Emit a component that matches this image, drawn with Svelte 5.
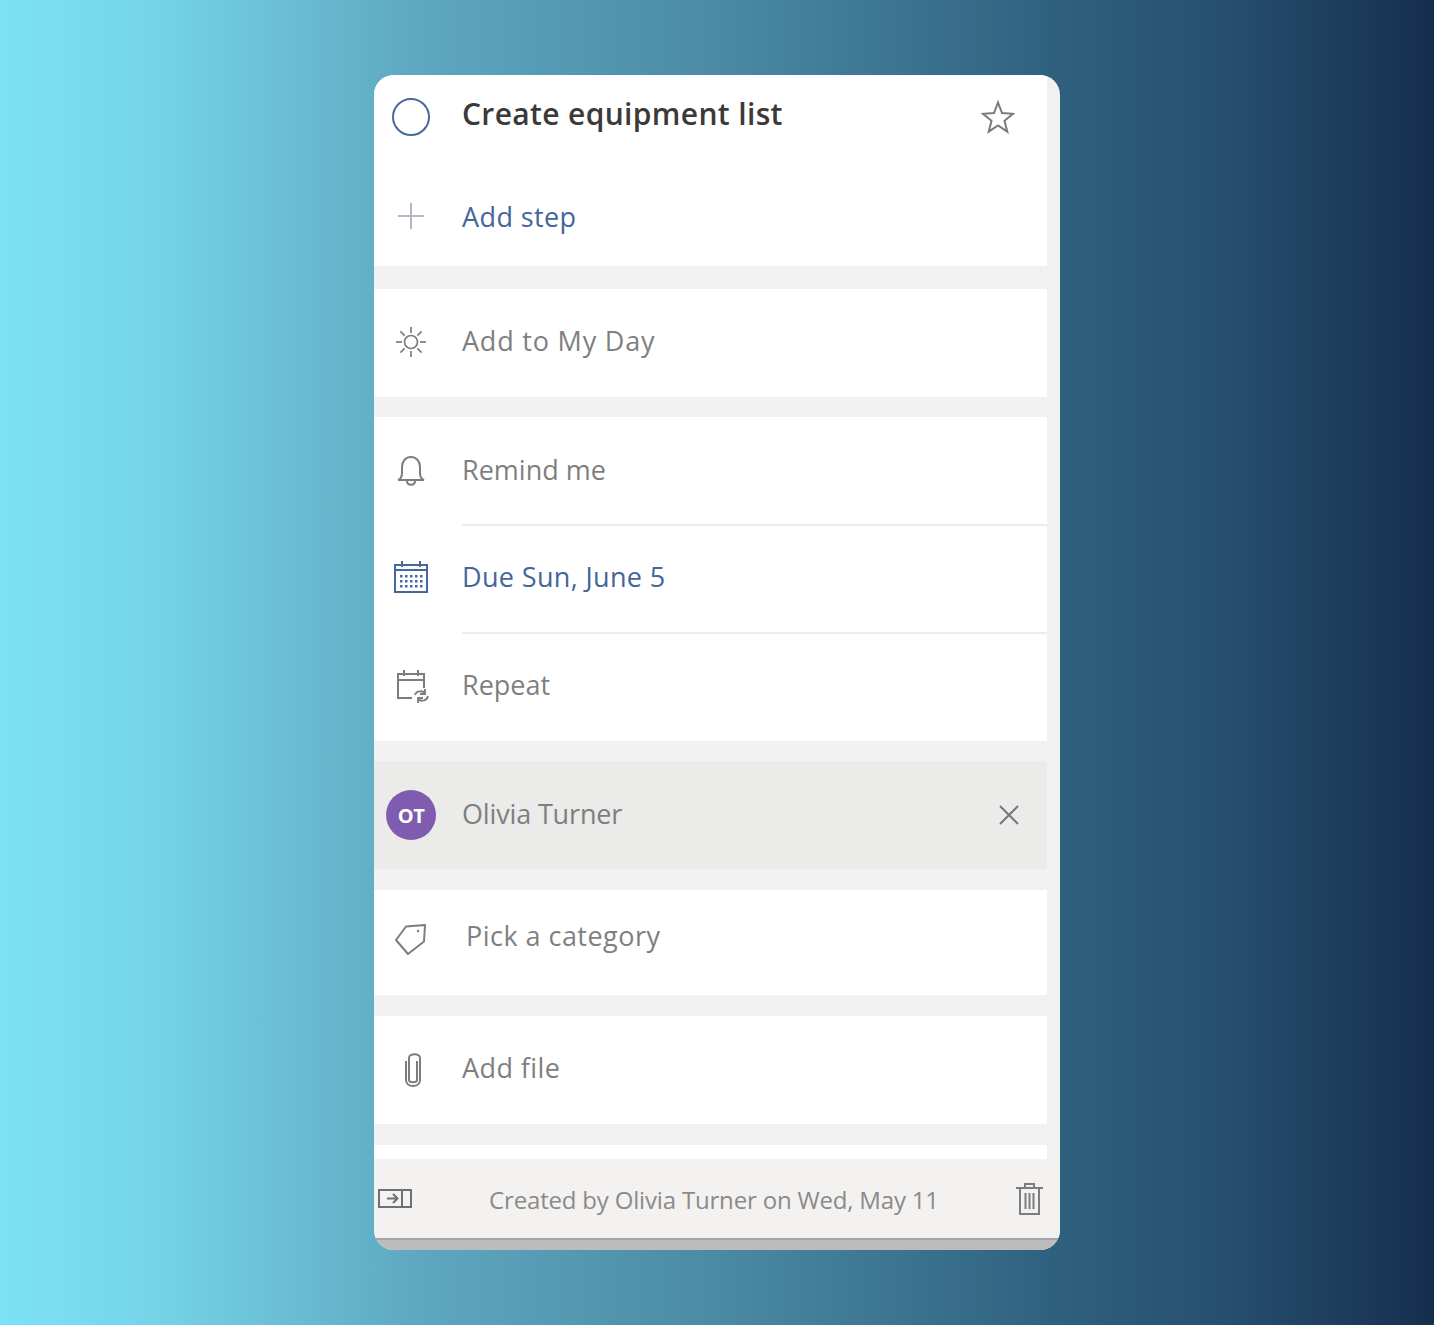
<script>
  const dotRows = [0, 1, 2];
  const dotCols = [0, 1, 2, 3, 4];
  const sunRays = [0, 45, 90, 135, 180, 225, 270, 315];
</script>

<div class="page">
  <main class="card">
    <div class="scroll">
      <section class="group first">
        <div class="title-row">
          <span class="slot">
            <svg width="38" height="38" viewBox="0 0 38 38"><circle cx="19" cy="19" r="18" fill="none" stroke="#47689c" stroke-width="2"/></svg>
          </span>
          <h1>Create equipment list</h1>
          <svg class="star" width="34" height="34" viewBox="0 0 34 34"><path d="M17 2.500l4 10.500 11 .8-8.500 7 2.800 10.900L17 25.500 7.700 31.700l2.800-10.900-8.500-7 11-.8z" fill="none" stroke="#7a7a7a" stroke-width="2" stroke-linejoin="miter"/></svg>
        </div>
        <div class="row step">
          <span class="slot">
            <svg width="26" height="26" viewBox="0 0 26 26"><path d="M13 0v26M0 13h26" stroke="#b5b8c4" stroke-width="2"/></svg>
          </span>
          <span class="label blue step-label">Add step</span>
        </div>
      </section>

      <section class="group">
        <div class="row">
          <span class="slot">
            <svg class="sun" width="32" height="32" viewBox="0 0 32 32" fill="none" stroke="#7d7d7d" stroke-width="1.700">
              <circle cx="16" cy="16" r="6.500"/>
              {#each sunRays as a}
                <path d="M16 1v6" transform="rotate({a} 16 16)"/>
              {/each}
            </svg>
          </span>
          <span class="label day-label">Add to My Day</span>
        </div>
      </section>

      <section class="group">
        <div class="row ruled">
          <span class="slot">
            <svg width="28" height="30" viewBox="0 0 28 30" fill="none" stroke="#7d7d7d" stroke-width="2"><path d="M1 24c3-1 4-3 4-7v-6c0-6 4-10 9-10s9 4 9 10v6c0 4 1 6 4 7z"/><path d="M10 25c0 5 8 5 8 0"/></svg>
          </span>
          <span class="label tight">Remind me</span>
        </div>
        <div class="row ruled">
          <span class="slot">
            <svg class="calendar" width="34" height="32" viewBox="0 0 34 32" fill="none" stroke="#47689c" stroke-width="2">
              <rect x="1" y="4" width="32" height="27"/>
              <path d="M1 9h32M8 0v6M26 0v6" />
              {#each dotRows as r}
                {#each dotCols as c}
                  <rect x={6 + c * 5} y={14 + r * 5} width="2.500" height="2.500" fill="#47689c" stroke="none"/>
                {/each}
              {/each}
            </svg>
          </span>
          <span class="label blue due-label">Due Sun, June 5</span>
        </div>
        <div class="row">
          <span class="slot">
            <svg class="repeat" width="32" height="34" viewBox="0 0 32 34" fill="none" stroke="#7d7d7d" stroke-width="2">
              <path d="M15 28H1V4h26v14M1 10h26M7 0v6M21 0v6"/>
              <path d="M18 25c1-4 7-5 10-2M31 26c-1 5-7 6-10 3M28 19v5h-5M21 33v-5h5" stroke-width="1.800"/>
            </svg>
          </span>
          <span class="label">Repeat</span>
        </div>
      </section>

      <section class="group active">
        <div class="row">
          <span class="slot">
            <span class="avatar">OT</span>
          </span>
          <span class="label tight person-label">Olivia Turner</span>
          <svg class="close" width="20" height="20" viewBox="0 0 20 20"><path d="M1 1l18 18M19 1L1 19" stroke="#777" stroke-width="2"/></svg>
        </div>
      </section>

      <section class="group category">
        <div class="row">
          <span class="slot">
            <svg class="tag" width="32" height="32" viewBox="0 0 32 32" fill="none" stroke="#7d7d7d" stroke-width="2"><path d="M11 3.500L30 2l-1 16.500L13 31 1 17z" stroke-linejoin="round"/><circle cx="23" cy="8" r="1.200" fill="#7d7d7d" stroke="none"/></svg>
          </span>
          <span class="label category-label">Pick a category</span>
        </div>
      </section>

      <section class="group spaced">
        <div class="row">
          <span class="slot">
            <svg class="clip" width="18" height="34" viewBox="0 0 18 34" fill="none" stroke="#7d7d7d" stroke-width="2"><path d="M13 8v19c0 3-8 3-8 0V5c0-5 11-5 11 0v22c0 8-14 8-14 0V8"/></svg>
          </span>
          <span class="label file-label">Add file</span>
        </div>
      </section>

      <div class="stub"></div>
    </div>

    <footer>
      <svg width="34" height="19" viewBox="0 0 34 19" fill="none" stroke="#707070" stroke-width="2"><rect x="1" y="1" width="32" height="17"/><path d="M24 1v17M9 9.500h10M15 5l4.500 4.500L15 14"/></svg>
      <span class="created">Created by Olivia Turner on Wed, May 11</span>
      <svg class="trash" width="27" height="32" viewBox="0 0 27 32" fill="none" stroke="#7d7d7d" stroke-width="2"><path d="M0 5h27M4 5v26h19V5M9 5V1h9v4M9.500 10v16M13.500 10v16M17.500 10v16"/></svg>
    </footer>
    <div class="edge"></div>
  </main>
</div>

<style>
  :global(body) {
    margin: 0;
  }

  .page {
    box-sizing: border-box;
    height: 1325px;
    padding-top: 75px;
    display: flex;
    justify-content: center;
    background: linear-gradient(90deg, #7de2f6 0%, #76d5ea 10%, #5da6bf 30%, #4b8aa5 50%, #2e607e 74%, #27506f 85%, #162e4e 100%);
    font-family: "Open Sans", "Noto Sans", sans-serif;
  }

  .card {
    width: 686px;
    height: 1175px;
    border-radius: 20px;
    overflow: hidden;
    background: #f2f1f1;
    display: flex;
    flex-direction: column;
  }

  .scroll {
    width: 673px;
    height: 1084px;
    display: flex;
    flex-direction: column;
    gap: 20px;
  }

  .group {
    background: #fff;
  }

  .first {
    margin-bottom: 3px;
  }

  .category,
  .spaced,
  .stub {
    margin-top: 1px;
  }

  .title-row {
    height: 84px;
    padding-bottom: 7px;
    display: flex;
    align-items: center;
  }

  h1 {
    margin: 0 0 8px;
    font-size: 30px;
    font-weight: 600;
    color: #3b3a39;
    letter-spacing: 0.35px;
  }

  .star {
    margin-left: auto;
    margin-right: 32px;
  }

  .slot {
    flex: none;
    width: 74px;
    margin-right: 14px;
    display: flex;
    justify-content: center;
  }

  .row {
    height: 108px;
    display: flex;
    align-items: center;
    position: relative;
  }

  .step {
    height: 100px;
  }

  .ruled::after {
    content: "";
    position: absolute;
    left: 88px;
    right: 0;
    bottom: -1px;
    height: 2px;
    background: #ececec;
  }

  .label {
    font-size: 27px;
    color: #7f7f7f;
    margin-bottom: 6px;
  }

  .tight {
    margin-bottom: 4px;
  }

  .blue {
    color: #45659b;
  }

  .step-label {
    margin-bottom: 0;
    letter-spacing: 0.4px;
  }

  .day-label {
    letter-spacing: 0.8px;
  }

  .due-label {
    letter-spacing: 0.35px;
  }

  .person-label {
    letter-spacing: -0.15px;
  }

  .file-label {
    letter-spacing: 0.4px;
  }

  .sun {
    margin-bottom: 2px;
  }

  .calendar {
    margin-bottom: 4px;
  }

  .repeat {
    margin-left: 4px;
  }

  .clip {
    margin-left: 3px;
  }

  .tag {
    margin-bottom: 8px;
  }

  .active {
    background: #ebebea;
  }

  .avatar {
    width: 50px;
    height: 50px;
    border-radius: 50%;
    background: #7f5cb0;
    color: #fff;
    font-size: 20px;
    font-weight: 700;
    display: flex;
    align-items: center;
    justify-content: center;
    letter-spacing: -0.5px;
  }

  .close {
    margin-left: auto;
    margin-right: 28px;
  }

  .category .row {
    height: 105px;
  }

  .category .label {
    margin-left: 4px;
    margin-bottom: 14px;
    letter-spacing: 0.47px;
  }

  .stub {
    height: 14px;
    background: #fff;
    flex: none;
  }

  footer {
    flex: none;
    box-sizing: border-box;
    height: 79px;
    padding: 0 17px 0 4px;
    display: flex;
    align-items: center;
    justify-content: space-between;
    background: #f3f2f1;
  }

  .created {
    font-size: 24px;
    letter-spacing: -0.18px;
    color: #8a8a8a;
    margin-top: 2px;
  }

  .edge {
    box-sizing: border-box;
    height: 12px;
    border-top: 2px solid #a6a6a6;
    background: #bcbcbc;
    flex: none;
  }
</style>
